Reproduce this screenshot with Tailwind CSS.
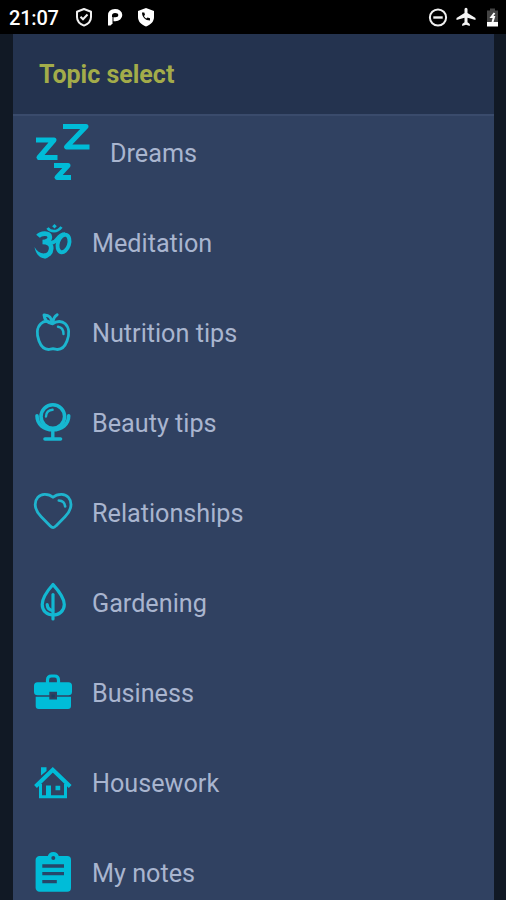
<!DOCTYPE html>
<html lang="en">
<head>
  <meta charset="UTF-8" />
  <meta name="viewport" content="width=device-width, initial-scale=1.0"/>
  <title>Topic select</title>
  <script src="https://cdn.jsdelivr.net/npm/@tailwindcss/browser@4"></script>
</head>
<body class="h-screen overflow-hidden bg-[#111925] font-[Roboto,sans-serif]">
  <div class="flex h-[900px] w-[506px] flex-col overflow-hidden">

    <!-- Status bar -->
    <div class="flex h-[34px] shrink-0 items-center bg-black pl-[9px] text-white">
      <span class="w-[66px] pt-px text-[20px] leading-none font-medium tracking-[-0.2px]">21:07</span>
      <svg class="h-5 w-[18px]" viewBox="0 0 18 20" fill="none" stroke="#f0f0f0" stroke-width="2">
        <path d="M9 2 16 4.7V10c0 4-2.800 7-7 8.600C4.800 17 2 14 2 10V4.700z" stroke-linejoin="round"/>
        <path d="m5.500 9.700 2.500 2.500 4.500-4.700"/>
      </svg>
      <svg class="ml-[14px] h-5 w-[16px]" viewBox="0 0 16 20">
        <path d="M3 11V8.500C3 5.500 5 4 8 4s5.300 1.600 5.300 4-2 4.200-5 4.200H6.500" fill="none" stroke="#fff" stroke-width="4"/>
        <path d="M1 10h4.500v6.500L3.500 18.500H1z" fill="#fff"/>
      </svg>
      <svg class="ml-[14px] h-5 w-[18px]" viewBox="0 0 18 20">
        <path d="M9 1 17 4v6c0 4.500-3 7.500-8 9.500C4 17.500 1 14.500 1 10V4z" fill="#fff"/>
        <path d="M5 5.500c0 4.500 3.500 8 8 8v-2.300l-2.500-.8-1.200 1C8 10.800 7.400 10 7 9l1-1.200-.7-2.300z" fill="#000"/>
      </svg>
      <svg class="ml-auto h-5 w-5" viewBox="0 0 20 20" fill="none" stroke="#f0f0f0">
        <circle cx="10" cy="10.500" r="8.100" stroke-width="2"/>
        <path d="M5.300 10.500h9.400" stroke-width="2.400"/>
      </svg>
      <svg class="ml-[8px] h-5 w-5" viewBox="0 0 20 20" fill="#f5f5f5">
        <path d="M19.500 13v-2L11.500 6V2.200a1.500 1.500 0 0 0-3 0V6L.5 11v2l8-2.300v4.600l-2.300 1.800V19l3.800-1.200 3.800 1.200v-1.900l-2.300-1.800v-4.600z"/>
      </svg>
      <svg class="mr-[7px] ml-[10px] h-5 w-[13px]" viewBox="0 0 13 20">
        <path d="M4 1.500h5v2h3V15H1V3.500h3z" fill="#444"/>
        <path d="M1 15h11v4.500H1z" fill="#fff"/>
        <path d="M8.500 6 5.500 10H8L6.500 15" fill="none" stroke="#fff" stroke-width="2"/>
      </svg>
    </div>

    <!-- Dialog -->
    <div class="mr-3 ml-[13px] flex min-h-0 flex-1 flex-col bg-[#304161]">
      <div class="flex h-[82px] shrink-0 items-center border-b-2 border-[#3a4b6c] bg-[#24334f] pl-[26px]">
        <h1 class="text-[25px] leading-none font-bold text-[#a3ac4a]">Topic select</h1>
      </div>

      <ul class="-mt-2 pl-[19px] text-[25.2px] leading-none text-[#a9b5cf]">
        <li class="flex h-[90px] items-center gap-[18px]">
          <svg class="size-[60px]" viewBox="0 0 60 60" fill="none" stroke="#00bcd8" stroke-width="5" stroke-linejoin="round">
            <path d="M31 3.500h23L34.500 24H57.500" />
            <path d="M4 17h18L7 34.500h18.500" />
            <path d="M22 42.500h14L25 54.500h14" />
          </svg>
          <span class="pt-[2px]">Dreams</span>
        </li>
        <li class="flex h-[90px] items-center gap-[18px]">
          <svg class="size-[42px]" viewBox="0 0 42 42" fill="none" stroke="#0cb8d3">
            <path d="M6 14.300c3-3.600 11.500-4 11.800.7.200 3.500-3.500 5-7.300 5 5.500 0 9 2.400 8.700 6.500-.3 4.500-3.200 7.300-7 7.300" stroke-width="4.700"/>
            <path d="M14.500 36.200C8 37.500 3.500 31.500 2.500 25c2.500 4.500 6 7 10.500 6.500z" fill="#0cb8d3" stroke="none"/>
            <path d="M17.500 20.300c3.500 1.200 5.700-.3 7.800-3.500C27.500 13.500 30 12 33 12" stroke-width="3.700"/>
            <ellipse cx="31.500" cy="21.500" rx="5.600" ry="9" stroke-width="3.900" transform="rotate(18 31.500 21.500)"/>
            <path d="M15.500 6c3 4 9.500 4.800 14-1" stroke-width="2.800"/>
            <path d="m22.500 2 2.300 2.200-2.300 2.300-2.300-2.300z" fill="#0cb8d3" stroke="none"/>
          </svg>
          <span class="pt-[2px]">Meditation</span>
        </li>
        <li class="flex h-[90px] items-center gap-[18px]">
          <svg class="size-[42px]" viewBox="0 0 42 42" fill="none" stroke="#1cb5cf" stroke-width="2.900" stroke-linecap="round" stroke-linejoin="round">
            <path d="M20.500 11.800C16.500 8.800 12 8.800 8.800 11.700 4.700 15.500 4.500 22.500 7 29c2.200 5.700 5.800 8.500 9.500 8.500 1.700 0 2.600-.7 4.500-.7s2.800.7 4.500.7c3.700 0 7.300-2.800 9.500-8.500 2.500-6.500 2.300-13.500-1.800-17.300-3.200-2.900-8.700-2.900-12.700.1z"/>
            <path d="M20 11.500C15 10.500 12.500 8 12 3c5-.3 8 3 8 8.500zM21 10.500c.2-3.700 1.500-6.200 4.200-7.800"/>
            <path d="M26 14.700c3.500.5 5.500 3 5.500 7.300" stroke-width="2.400"/>
          </svg>
          <span class="pt-[2px]">Nutrition tips</span>
        </li>
        <li class="flex h-[90px] items-center gap-[18px]">
          <svg class="size-[42px]" viewBox="0 0 42 42" fill="none" stroke="#16b7d1" stroke-linecap="round">
            <circle cx="20.800" cy="14.500" r="11.800" stroke-width="3.600"/>
            <path d="M14 14.500c.2-3.800 2.800-6.400 6.600-6.700" stroke-width="2.400"/>
            <path d="M5 13.800C5 22.500 12 27.800 20.800 27.800S36.700 22.500 36.700 13.800" stroke-width="3.600"/>
            <path d="M20.800 28v8" stroke-width="3.400"/>
            <path d="M13 37h15.500" stroke-width="3.600"/>
          </svg>
          <span class="pt-[2px]">Beauty tips</span>
        </li>
        <li class="flex h-[90px] items-center gap-[18px]">
          <svg class="size-[42px]" viewBox="0 0 42 42" fill="none" stroke="#1fb4ce" stroke-width="2.800" stroke-linecap="round" stroke-linejoin="round">
            <path d="M21 5.300C18.500 2.900 15.500 2.200 12.500 2.300 7 2.500 3.200 7 3.200 12.500c0 5 2.300 8.500 6 12.200l8.800 9c2.300 2.500 4 2.500 6.200 0l8.800-9c3.700-3.700 6-7.200 6-12.200 0-5.500-3.800-10-9.300-10.200-3-.1-6.200.6-8.700 3z"/>
            <path d="M26.800 8.500c3.500.2 6 2.500 6.400 6" stroke-width="2.600"/>
          </svg>
          <span class="pt-[2px]">Relationships</span>
        </li>
        <li class="flex h-[90px] items-center gap-[18px]">
          <svg class="size-[42px]" viewBox="0 0 42 42" fill="none" stroke="#12b8d2" stroke-width="3.200" stroke-linecap="round" stroke-linejoin="round">
            <path d="M21 2.500C16.500 7.500 10.200 15 10.200 22.500 10.200 29 15 33 21 33s11.300-4 11.300-10.500C32.300 15 25.500 7.500 21 2.500z"/>
            <path d="M21 12.500v24.500"/>
            <path d="M15.200 22.700c.2 3.300 2.300 5.400 5.500 5.900"/>
          </svg>
          <span class="pt-[2px]">Gardening</span>
        </li>
        <li class="flex h-[90px] items-center gap-[18px]">
          <svg class="size-[42px]" viewBox="0 0 42 42" fill="#00bcd8">
            <path d="M15.500 11V8c0-2.500 1.500-4 4-4h3c2.500 0 4 1.500 4 4v3" fill="none" stroke="#00bcd8" stroke-width="3.200"/>
            <path d="M5.500 10.200h31a3.500 3.500 0 0 1 3.500 3.500V20a3.500 3.500 0 0 1-3.500 3.300H25v-3.500h-7.700v3.500H5.500A3.500 3.500 0 0 1 2 20v-6.300a3.500 3.500 0 0 1 3.500-3.500z"/>
            <path d="M3.700 24.800h13.600v2.700H25v-2.700h14v9.200a3 3 0 0 1-3 3H6.700a3 3 0 0 1-3-3z"/>
            <path d="M19.500 22.500h3.200v3h-3.200z" fill="#183f61"/>
          </svg>
          <span class="pt-[2px]">Business</span>
        </li>
        <li class="flex h-[90px] items-center gap-[18px]">
          <svg class="size-[42px]" viewBox="0 0 42 42" fill="#00bcd8">
            <path d="M9 5.300h5.500V9L9 13.500z"/>
            <path d="M3.500 24.500 20.800 7.700l17.400 16.800" fill="none" stroke="#00bcd8" stroke-width="4"/>
            <path d="M8.500 22v12.700h25V22" fill="none" stroke="#00bcd8" stroke-width="3"/>
            <path d="M14 23.500h5V35h-5zM23.500 23.700h4.700v4.500h-4.700z"/>
          </svg>
          <span class="pt-[2px]">Housework</span>
        </li>
        <li class="flex h-[90px] items-center gap-[18px]">
          <svg class="size-[42px]" viewBox="0 0 42 42">
            <path d="M7.500 4h8.300a5.800 5.800 0 0 1 11 0h8.400A3.900 3.900 0 0 1 39 8v27.700a3.900 3.900 0 0 1-3.800 4H7.500a3.900 3.900 0 0 1-3.900-4V8a3.900 3.900 0 0 1 3.900-4z" fill="#00bcd8"/>
            <circle cx="21.300" cy="6" r="2" fill="#2a4767"/>
            <path d="M10.300 14H32M10.300 21.700H32M10.300 29.600h14.500" stroke="#26476a" stroke-width="3.300"/>
          </svg>
          <span class="pt-[2px]">My notes</span>
        </li>
      </ul>
    </div>
  </div>
</body>
</html>
